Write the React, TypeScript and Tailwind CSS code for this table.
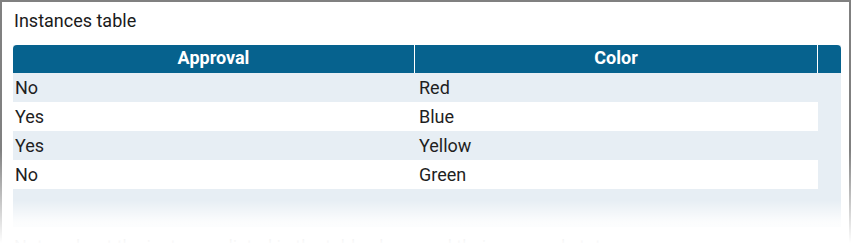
import React from "react";

const rows = [
  ["No", "Red"],
  ["Yes", "Blue"],
  ["Yes", "Yellow"],
  ["No", "Green"],
];

export default function App() {
  return (
    <div className="relative w-[851px] h-[243px] overflow-hidden bg-white" style={{ fontFamily: "Roboto, 'Liberation Sans', sans-serif" }}>
      <div className="h-[300px] border-2 border-b-0 border-[#808080] bg-white pl-[11px] pr-[8px] pt-[8px]">
        <div className="text-[18px] leading-[22px] text-[#1a1a1a] pl-[1px]">Instances table</div>
        <div className="mt-[13px] w-[828px] bg-[#e7eef4] pb-[38px]">
          <div className="flex h-[28px] bg-[#06628e] rounded-t-[4px] text-white font-bold text-[18px] leading-[25px]">
            <div className="w-[402px] text-center border-r border-white">Approval</div>
            <div className="w-[403px] text-center border-r border-white">Color</div>
            <div className="flex-1" />
          </div>
          {rows.map((r, i) => (
            <div key={i} className={`flex h-[29px] w-[805px] text-[18px] leading-[29px] text-[#1f1f1f] ${i % 2 === 1 ? "bg-white" : "bg-[#e7eef4]"}`}>
              <div className="w-[403px] pl-[2px]">{r[0]}</div>
              <div className="flex-1 pl-[3px]">{r[1]}</div>
            </div>
          ))}
        </div>
        <div className="mt-[9px] text-[18px] leading-[22px] text-[#1a1a1a] pl-[1px]">Notes about the instances listed in the table above and their approval state</div>
      </div>
      <div className="absolute left-0 w-[2px] top-[150px] bottom-0 bg-gradient-to-b from-white/0 to-white" />
      <div className="absolute right-0 w-[2px] top-[150px] bottom-0 bg-gradient-to-b from-white/0 to-white" />
      <div className="absolute left-[2px] right-[2px] top-[200px] bottom-0 bg-gradient-to-b from-white/0 via-white/85 to-white/[0.98]" />
    </div>
  );
}
